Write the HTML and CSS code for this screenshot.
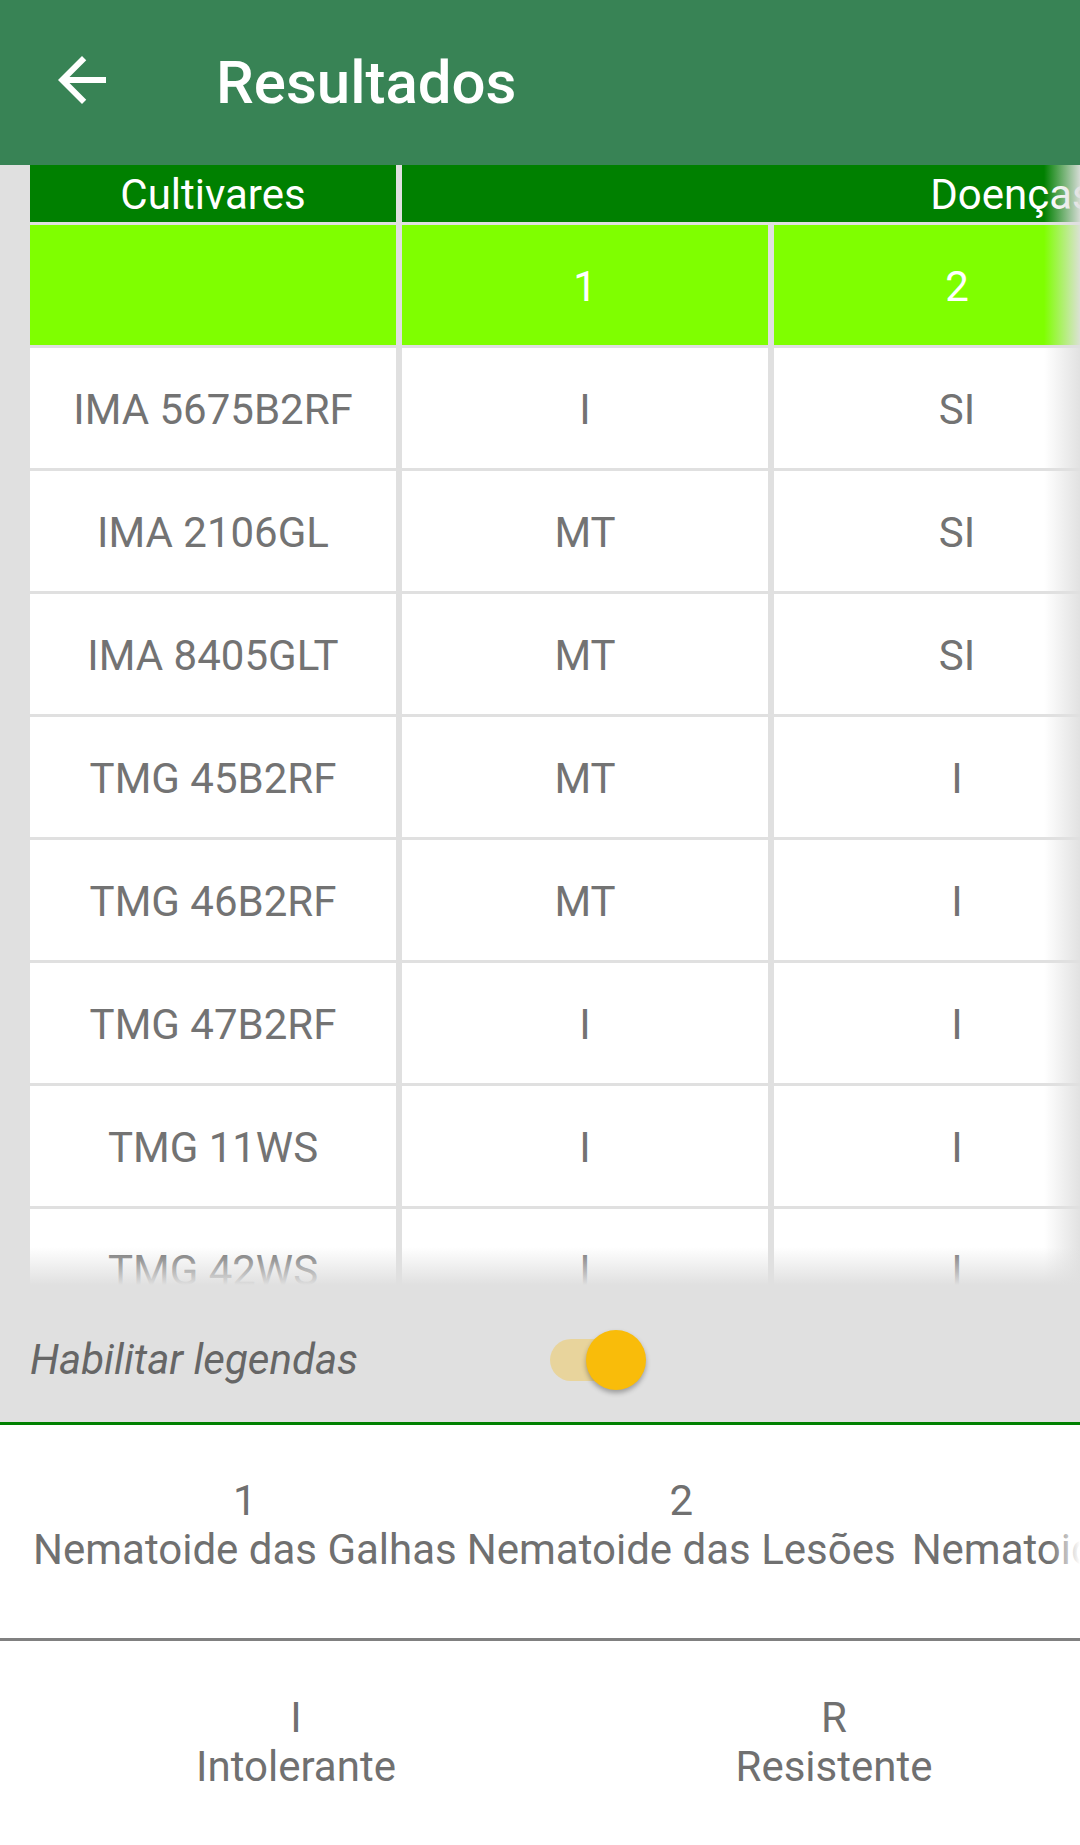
FILE: index.html
```html
<!DOCTYPE html>
<html lang="pt">
<head>
<meta charset="utf-8">
<title>Resultados</title>
<link rel="stylesheet" href="styles.css">
</head>
<body>
<header class="appbar">
  <svg class="back" viewBox="0 0 24 24" width="72" height="72" aria-hidden="true"><path d="M20 11H7.83l5.59-5.59L12 4l-8 8 8 8 1.41-1.41L7.83 13H20v-2z" fill="#fff"/></svg>
  <h1 class="title">Resultados</h1>
</header>

<section class="viewport">
  <div class="table">
    <div class="row head">
      <div class="cell dark">Cultivares</div>
      <div class="cell dark wide">Doenças</div>
    </div>
    <div class="row sub">
      <div class="cell lime"></div>
      <div class="cell lime">1</div>
      <div class="cell lime">2</div>
    </div>
    <div class="row"><div class="cell">IMA 5675B2RF</div><div class="cell">I</div><div class="cell">SI</div></div>
    <div class="row"><div class="cell">IMA 2106GL</div><div class="cell">MT</div><div class="cell">SI</div></div>
    <div class="row"><div class="cell">IMA 8405GLT</div><div class="cell">MT</div><div class="cell">SI</div></div>
    <div class="row"><div class="cell">TMG 45B2RF</div><div class="cell">MT</div><div class="cell">I</div></div>
    <div class="row"><div class="cell">TMG 46B2RF</div><div class="cell">MT</div><div class="cell">I</div></div>
    <div class="row"><div class="cell">TMG 47B2RF</div><div class="cell">I</div><div class="cell">I</div></div>
    <div class="row"><div class="cell">TMG 11WS</div><div class="cell">I</div><div class="cell">I</div></div>
    <div class="row"><div class="cell">TMG 42WS</div><div class="cell">I</div><div class="cell">I</div></div>
  </div>
  <div class="fade-right"></div>
  <div class="fade-bottom"></div>
</section>

<div class="toggle-row">
  <span class="toggle-label">Habilitar legendas</span>
  <span class="switch"><span class="track"></span><span class="thumb"></span></span>
</div>

<section class="legend">
  <div class="legend-diseases">
    <div class="item"><span>1</span><span>Nematoide das Galhas</span></div>
    <div class="item"><span>2</span><span>Nematoide das Lesões</span></div>
    <div class="item third"><span>3</span><span>Nematoide Reniforme</span></div>
    <div class="fade-white"></div>
  </div>
  <div class="legend-levels">
    <div class="item"><span>I</span><span>Intolerante</span></div>
    <div class="item"><span>R</span><span>Resistente</span></div>
  </div>
</section>
</body>
</html>
```

FILE: styles.css
```css
* { box-sizing: border-box; }

html, body {
  margin: 0;
  padding: 0;
}

body {
  width: 1080px;
  height: 1845px;
  overflow: hidden;
  background: #e0e0e0;
  font-family: Roboto, "Noto Sans", "Liberation Sans", sans-serif;
  display: flex;
  flex-direction: column;
}

.appbar {
  height: 165px;
  flex: none;
  background: #388355;
  display: flex;
  align-items: center;
  padding-left: 46px;
}

.back {
  display: block;
  margin-bottom: 6px;
}

.title {
  margin: 0 0 0 98px;
  color: #fff;
  font-size: 60px;
  font-weight: 500;
  line-height: 70px;
}

.viewport {
  position: relative;
  height: 1120px;
  flex: none;
  overflow: hidden;
  padding-left: 30px;
}

.table {
  display: flex;
  flex-direction: column;
  gap: 3px;
  width: 2000px;
}

.row {
  display: flex;
  gap: 6px;
  height: 120px;
}

.row.head {
  height: 57px;
}

.cell {
  width: 366px;
  flex: none;
  background: #fff;
  display: flex;
  align-items: center;
  justify-content: center;
  padding-top: 2px;
  font-size: 42px;
  color: #737373;
  white-space: nowrap;
}

.cell.dark {
  background: #008000;
  color: #fff;
}

.cell.wide {
  width: 1220px;
}

.cell.lime {
  background: #7fff00;
  color: #fff;
}

.fade-right {
  position: absolute;
  top: 0;
  right: 0;
  width: 36px;
  height: 100%;
  background: linear-gradient(to right, rgba(224,224,224,0), rgba(224,224,224,0.95));
}

.fade-bottom {
  position: absolute;
  left: 0;
  right: 0;
  bottom: 0;
  height: 38px;
  background: linear-gradient(to bottom, rgba(224,224,224,0), #e0e0e0);
}

.toggle-row {
  height: 137px;
  flex: none;
  display: flex;
  align-items: center;
  padding: 12px 0 0 30px;
}

.toggle-label {
  width: 520px;
  font-style: italic;
  font-size: 42px;
  color: #666;
}

.switch {
  position: relative;
  width: 100px;
  height: 60px;
}

.track {
  position: absolute;
  left: 0;
  top: 9px;
  width: 86px;
  height: 42px;
  border-radius: 21px;
  background: #e8d49c;
}

.thumb {
  position: absolute;
  left: 36px;
  top: 0;
  width: 60px;
  height: 60px;
  border-radius: 50%;
  background: #f9bc0a;
  box-shadow: 0 3px 5px rgba(0,0,0,0.3);
}

.legend {
  flex: 1;
  background: #fff;
  border-top: 3px solid #008000;
  color: #707070;
  font-size: 42px;
  line-height: 49px;
}

.item {
  display: flex;
  flex-direction: column;
  align-items: center;
  white-space: nowrap;
  flex: none;
}

.legend-diseases {
  position: relative;
  height: 216px;
  display: flex;
  padding: 51px 0 0 28px;
  border-bottom: 3px solid #808080;
  overflow: hidden;
}

.legend-diseases .item {
  padding: 0 5px;
}

.legend-diseases .item.third {
  margin-left: 6px;
}

.fade-white {
  position: absolute;
  top: 0;
  right: 0;
  width: 30px;
  height: 100%;
  background: linear-gradient(to right, rgba(255,255,255,0), #fff);
}

.legend-levels {
  display: grid;
  grid-template-columns: 538px 538px;
  padding: 52px 0 0 27px;
}
```
